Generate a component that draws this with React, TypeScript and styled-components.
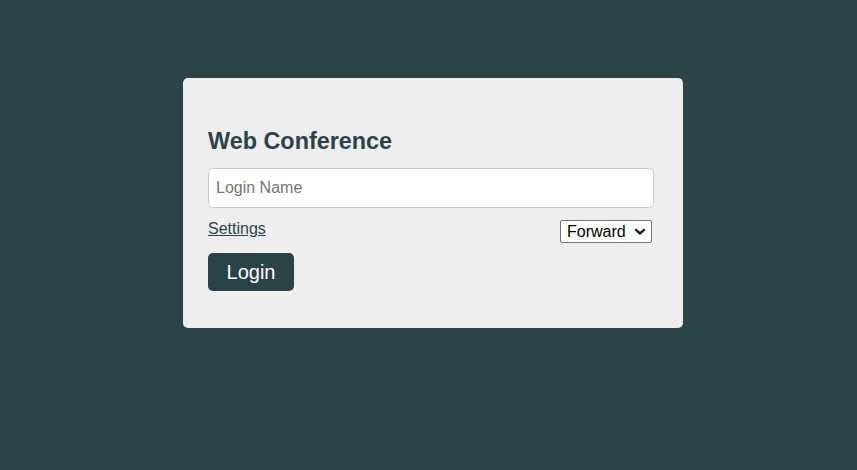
import React from 'react';
import styled, { createGlobalStyle } from 'styled-components';

const GlobalStyle = createGlobalStyle`
  html, body {
    margin: 0;
    padding: 0;
    background-color: #2c4249;
    font-family: "Liberation Sans", Arial, sans-serif;
  }
`;

const Page = styled.div`
  min-height: 470px;
  padding: 78px 0 0 183px;
  box-sizing: border-box;
`;

const Card = styled.div`
  width: 500px;
  height: 250px;
  box-sizing: border-box;
  padding: 25px;
  background-color: #eeeeee;
  border-radius: 5px;
`;

const Title = styled.h3`
  margin: 25px 0 0;
  font-size: 23.4px;
  line-height: 26px;
  font-weight: bold;
  color: #2c4249;
`;

const NameInput = styled.input`
  display: block;
  width: 446px;
  height: 40px;
  margin-top: 14px;
  padding: 0 7px;
  box-sizing: border-box;
  border: 1px solid #cccccc;
  border-radius: 5px;
  background: #ffffff;
  font-family: "Liberation Sans", Arial, sans-serif;
  font-size: 16px;
  color: #333333;
  outline: none;

  &::placeholder {
    color: #757575;
  }
`;

const OptionsRow = styled.div`
  display: flex;
  justify-content: space-between;
  align-items: flex-start;
  width: 446px;
  margin-top: 12px;
  height: 23px;
`;

const SettingsLink = styled.a`
  font-size: 16px;
  line-height: 18px;
  color: #2c4249;
  text-decoration: underline;
  cursor: pointer;
`;

const SelectWrap = styled.div`
  position: relative;
  margin-right: 2px;
  height: 23px;
`;

const ModeSelect = styled.select`
  appearance: none;
  -webkit-appearance: none;
  display: block;
  width: 92px;
  height: 23px;
  margin: 0;
  padding: 0 0 0 6px;
  box-sizing: border-box;
  font-family: "Liberation Sans", Arial, sans-serif;
  font-size: 16px;
  color: #000000;
  background: #ffffff;
  border: 1px solid #767676;
  border-radius: 2px;
  outline: none;
`;

const Chevron = styled.svg`
  position: absolute;
  top: 8px;
  right: 6px;
  width: 12px;
  height: 7px;
  pointer-events: none;
`;

const LoginButton = styled.button`
  display: block;
  margin-top: 10px;
  width: 86px;
  height: 38px;
  padding: 0;
  border: none;
  border-radius: 5px;
  background-color: #2c4249;
  color: #ffffff;
  font-family: "Liberation Sans", Arial, sans-serif;
  font-size: 20px;
  cursor: pointer;
`;

const App = () => (
  <>
    <GlobalStyle />
    <Page>
      <Card>
        <Title>Web Conference</Title>
        <NameInput type="text" placeholder="Login Name" />
        <OptionsRow>
          <SettingsLink>Settings</SettingsLink>
          <SelectWrap>
            <ModeSelect defaultValue="forward">
              <option value="forward">Forward</option>
              <option value="mixed">Mixed</option>
            </ModeSelect>
            <Chevron viewBox="0 0 12 7">
              <path d="M1.3 1.2 L6 5.4 L10.7 1.2" fill="none" stroke="#111111" strokeWidth="2.2" />
            </Chevron>
          </SelectWrap>
        </OptionsRow>
        <LoginButton>Login</LoginButton>
      </Card>
    </Page>
  </>
);

export default App;
